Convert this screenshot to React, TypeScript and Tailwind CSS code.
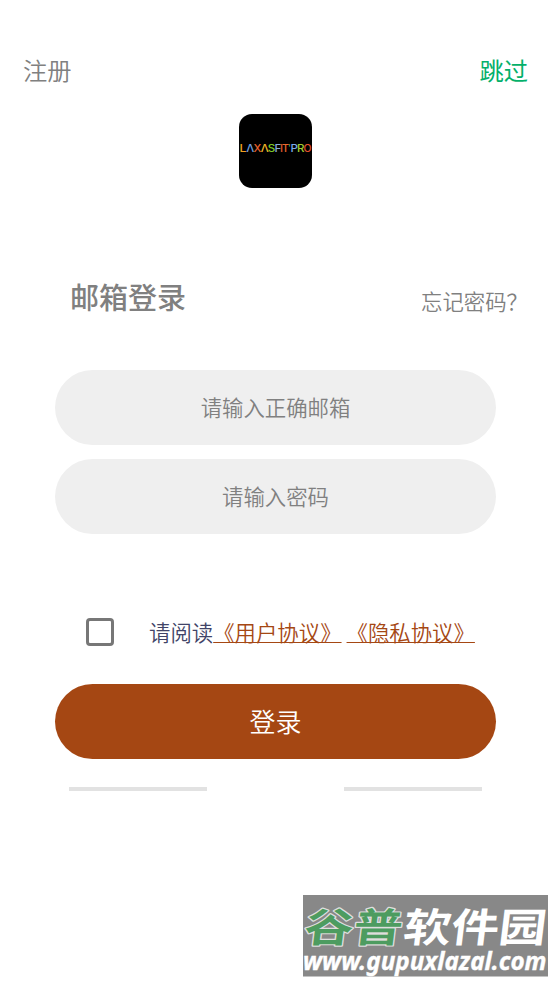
import type { ReactNode } from "react";

const brand: [string, string, number, number][] = [
  ["L", "#f0a020", 0.5, 7], ["Λ", "#6fa0e0", 7.2, 8], ["X", "#e8602c", 14.5, 7.8], ["Λ", "#f0b428", 21.7, 8],
  ["S", "#7ccc28", 28.7, 7.5], ["F", "#8aa8dc", 35.5, 6.8], ["I", "#e0582c", 41, 3], ["T", "#e8682c", 43, 7],
  ["'", "#5cb85c", 49.2, 2.5], ["P", "#7aa8ec", 51.5, 7.5], ["R", "#a0cc30", 58, 7.5], ["O", "#e0502c", 64.5, 8],
];

function Logo() {
  return (
    <svg className="mx-auto block h-[74px] w-[73px]" viewBox="0 0 73 74">
      <rect width="73" height="74" rx="13" fill="#000" />
      <g fontFamily="Inter, sans-serif" fontSize="10" fontWeight="500">
        {brand.map(([letter, color, x, width], i) => (
          <text key={i} x={x} y="37.7" textLength={width} lengthAdjust="spacingAndGlyphs" fill={color}>{letter}</text>
        ))}
      </g>
    </svg>
  );
}

function Field({ children }: { children: ReactNode }) {
  return (
    <div className="flex h-[75px] items-center justify-center rounded-full bg-[#efefef] pb-[2px] text-[21.4px] leading-8 text-[#808080]">
      {children}
    </div>
  );
}

function Watermark() {
  return (
    <svg className="absolute top-[894px] left-[302px] h-[87px] w-[249px]" viewBox="0 0 249 87">
      <rect x="1" y="1" width="245" height="81.5" fill="#888" />
      <g fontFamily="'Noto Sans CJK SC', sans-serif" fontWeight="700" transform="translate(0 47.5) skewX(-7)">
        <text x="1" y="0" fontSize="40" textLength="98" lengthAdjust="spacingAndGlyphs" fill="#4d9c60" stroke="#dedede" strokeWidth="2.4" strokeLinejoin="round" paintOrder="stroke">谷普</text>
        <text x="100" y="0" fontSize="40" textLength="143" lengthAdjust="spacingAndGlyphs" fill="#fff">软件园</text>
      </g>
      <text x="1" y="75.5" fontFamily="'Noto Sans', sans-serif" fontStyle="italic" fontWeight="700" fontSize="25" textLength="243.5" lengthAdjust="spacingAndGlyphs" fill="#fff" stroke="#fff" strokeWidth="0.4">www.gupuxlazal.com</text>
    </svg>
  );
}

export default function App() {
  return (
    <main className="relative h-[981px] w-[551px] overflow-hidden bg-white pt-[50px] font-['Noto_Sans_CJK_SC',sans-serif] font-[350]">
      <header className="flex h-10 items-center justify-between pr-[23px] pl-[23px] text-[24.3px] leading-10">
        <span className="text-[#808080]">注册</span>
        <span className="font-normal text-[#04b06a]">跳过</span>
      </header>
      <div className="mt-6">
        <Logo />
      </div>
      <div className="mt-[88px] flex h-10 items-center justify-between pr-[23px] pl-[70px] text-[#808080]">
        <h1 className="text-[29px] leading-10 font-medium">邮箱登录</h1>
        <span className="pt-[9px] text-[21.4px] leading-8">忘记密码？</span>
      </div>
      <div className="mx-[55px] mt-[54px] flex flex-col gap-[14px]">
        <Field>请输入正确邮箱</Field>
        <Field>请输入密码</Field>
      </div>
      <div className="mt-[78px] flex h-10 items-center pl-[86px] text-[21.4px] leading-8 whitespace-nowrap">
        <span className="h-7 w-7 shrink-0 rounded-[4px] border-[3px] border-[#777]" />
        <span className="ml-[35px] pb-px text-[#414468]">请阅读</span>
        <span className="flex gap-[5px] pb-px text-[#a54713]">
          <a className="underline decoration-1 underline-offset-1">《用户协议》</a>
          <a className="underline decoration-1 underline-offset-1">《隐私协议》</a>
        </span>
      </div>
      <button className="mx-[55px] mt-8 flex h-[75px] w-[441px] items-center justify-center rounded-full bg-[#a54713] pb-[2px] text-[26px] leading-10 text-white">
        登录
      </button>
      <div className="mt-7 flex justify-between pr-[69px] pl-[69px]">
        <span className="h-[3.5px] w-[138px] bg-[#e2e2e2]" />
        <span className="h-[3.5px] w-[138px] bg-[#e2e2e2]" />
      </div>
      <Watermark />
    </main>
  );
}
